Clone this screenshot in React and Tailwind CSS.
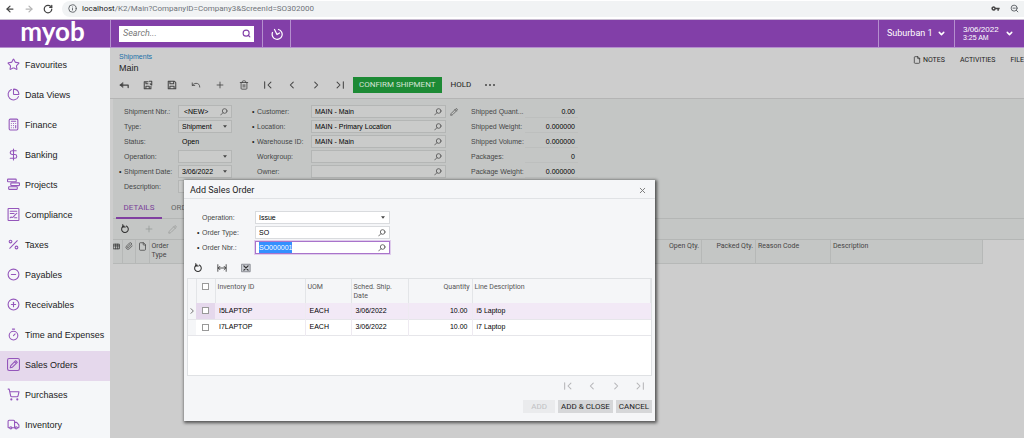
import { useEffect, useRef } from "react"
import {
  ArrowLeft,
  ArrowRight,
  Calculator,
  ChartPie,
  ChevronDown,
  CircleMinus,
  CirclePlus,
  DollarSign,
  File,
  Info,
  Paperclip,
  Pencil,
  Percent,
  Plus,
  RotateCw,
  Search,
  ShoppingCart,
  Star,
  Timer,
  Trash2,
  Truck,
  Undo,
  X,
  ZoomOut,
} from "lucide-react"
import { MdVpnKey } from "react-icons/md"

// ---- icons that the icon packages lack ----

function Svg({ children, className, box = 24, width = 2 }) {
  return (
    <svg
      viewBox={`0 0 ${box} ${box}`}
      className={className}
      fill="none"
      stroke="currentColor"
      strokeWidth={width}
      strokeLinecap="round"
      strokeLinejoin="round"
      aria-hidden="true"
    >
      {children}
    </svg>
  )
}

const GanttIcon = ({ className }) => (
  <Svg className={className}>
    <rect x="1" y="2" width="16" height="5" rx="1" />
    <rect x="7" y="9" width="16" height="5" rx="1" />
    <rect x="3" y="16" width="16" height="5" rx="1" />
  </Svg>
)

const ComplianceIcon = ({ className }) => (
  <Svg className={className}>
    <rect x="2" y="1" width="20" height="22" rx="1" />
    <path d="M6 6h12M6 10h7M6 18c2-3 3 1 5-1s4-5 7-7M14 18h4" />
  </Svg>
)

const OrderIcon = ({ className }) => (
  <Svg className={className}>
    <rect x="1" y="1" width="22" height="22" rx="3" />
    <path d="M6 18l1-4L16 5l3 3-9 9zM14 7l3 3" />
  </Svg>
)

// open ring with a hand that points into its gap
const ClockIcon = ({ className }) => (
  <Svg className={className} width={2.5}>
    <path d="M15 3A10 10 0 1 1 3 9" />
    <path d="M7 3l5 10 5-3" />
  </Svg>
)

const BackIcon = ({ className }) => (
  <Svg className={className} width={3}>
    <path d="M22 18v-6H3" />
    <path d="M9 6l-7 6 7 6z" fill="currentColor" strokeWidth="1" />
  </Svg>
)

const SaveIcon = ({ className }) => (
  <Svg className={className} width={2.5}>
    <path d="M3 3h15l3 3v15H3zM7 3v6h9V3M7 21v-6h10v6" />
  </Svg>
)

const SaveCloseIcon = ({ className }) => (
  <Svg className={className} width={2.5}>
    <path d="M12 4H3v17h16v-6M7 21v-6h8v6M7 4v5h5M15 3h6v9M21 12l-4-3" />
  </Svg>
)

const FirstIcon = ({ className }) => (
  <Svg className={className} width={2.5}>
    <path d="M4 4v16M19 5l-7 7 7 7" />
  </Svg>
)

const PrevIcon = ({ className }) => (
  <Svg className={className} width={2.5}>
    <path d="M15 5l-7 7 7 7" />
  </Svg>
)

const NextIcon = ({ className }) => (
  <Svg className={className} width={2.5}>
    <path d="M9 5l7 7-7 7" />
  </Svg>
)

const LastIcon = ({ className }) => (
  <Svg className={className} width={2.5}>
    <path d="M20 4v16M5 5l7 7-7 7" />
  </Svg>
)

const RefreshIcon = ({ className }) => (
  <Svg className={className} width={2.5}>
    <path d="M15 5a8 8 0 1 1-8 1" />
    <path d="M6 1v7h7z" fill="currentColor" strokeWidth="1" />
  </Svg>
)

const FitIcon = ({ className }) => (
  <Svg className={className} width={2}>
    <path d="M2 4v16M22 4v16M3 12h18M7 8l-4 4 4 4M17 8l4 4-4 4" />
  </Svg>
)

const ExcelIcon = ({ className }) => (
  <Svg className={className} width={3}>
    <rect x="2" y="3" width="20" height="18" strokeWidth="2" fill="#c9ccd2" stroke="#7d8087" />
    <path d="M7 7l10 10M17 7L7 17" />
  </Svg>
)

const LookupIcon = ({ className }) => (
  <Svg className={className} width={2.5}>
    <circle cx="14" cy="9" r="7" />
    <path d="M9 14l-7 7" />
  </Svg>
)

const CaretIcon = ({ className }) => (
  <svg viewBox="0 0 8 5" className={className} fill="currentColor" aria-hidden="true">
    <path d="M0 0h8L4 5z" />
  </svg>
)

const GridNoteIcon = ({ className }) => (
  <Svg className={className} width={3}>
    <path d="M2 4h20v16H2zM2 10h20M9 4v16M16 4v16" />
  </Svg>
)

// ---- data ----

const menu = [
  { name: "Favourites", icon: Star },
  { name: "Data Views", icon: ChartPie },
  { name: "Finance", icon: Calculator },
  { name: "Banking", icon: DollarSign },
  { name: "Projects", icon: GanttIcon },
  { name: "Compliance", icon: ComplianceIcon },
  { name: "Taxes", icon: Percent },
  { name: "Payables", icon: CircleMinus },
  { name: "Receivables", icon: CirclePlus },
  { name: "Time and Expenses", icon: Timer },
  { name: "Sales Orders", icon: OrderIcon, active: true },
  { name: "Purchases", icon: ShoppingCart },
  { name: "Inventory", icon: Truck },
]

const actions = [
  { name: "Back", icon: BackIcon },
  { name: "Save and close", icon: SaveCloseIcon },
  { name: "Save", icon: SaveIcon },
  { name: "Undo", icon: Undo },
  { name: "Add", icon: Plus },
  { name: "Delete", icon: Trash2 },
  { name: "First", icon: FirstIcon },
  { name: "Previous", icon: PrevIcon },
  { name: "Next", icon: NextIcon },
  { name: "Last", icon: LastIcon },
]

const totals = [
  { label: "Shipped Quant...", value: "0.00" },
  { label: "Shipped Weight:", value: "0.000000" },
  { label: "Shipped Volume:", value: "0.000000" },
  { label: "Packages:", value: "0" },
  { label: "Package Weight:", value: "0.000000" },
]

const lines = [
  { id: "I5LAPTOP", uom: "EACH", date: "3/06/2022", qty: "10.00", text: "i5 Laptop", current: true },
  { id: "I7LAPTOP", uom: "EACH", date: "3/06/2022", qty: "10.00", text: "i7 Laptop" },
]

// ---- form parts ----

function Label({ htmlFor, required, className, children }) {
  return (
    <label htmlFor={htmlFor} className={`flex shrink-0 items-center whitespace-nowrap text-[#454747] ${className}`}>
      <span className="w-[5px] shrink-0 text-[#222]">{required && "•"}</span>
      {children}
    </label>
  )
}

const dimBox = "border-[#b4b6b5] bg-[#cacbca]"

function LookupField({ id, label, value = "", required, labelWidth, boxWidth, box = dimBox, inputRef, children }) {
  return (
    <div className="flex h-[13px] items-center">
      <Label htmlFor={id} required={required} className={labelWidth}>{label}</Label>
      <div className={`flex h-[13px] shrink-0 items-center border pr-[3px] ${boxWidth} ${box}`}>
        <input
          id={id}
          ref={inputRef}
          defaultValue={value}
          className="min-w-0 flex-1 bg-transparent pl-[3px] text-black outline-none selection:bg-[#3390ff] selection:text-white"
        />
        <LookupIcon className="size-[8px] text-[#555]" />
      </div>
      {children}
    </div>
  )
}

function SelectField({ id, label, value = "", required, labelWidth, boxWidth, box = dimBox }) {
  return (
    <div className="flex h-[13px] items-center">
      <Label htmlFor={id} required={required} className={labelWidth}>{label}</Label>
      <div className={`flex h-[13px] shrink-0 items-center border pr-[4px] ${boxWidth} ${box}`}>
        <select id={id} defaultValue={value} className="min-w-0 flex-1 appearance-none bg-transparent pl-[3px] text-black outline-none">
          <option>{value}</option>
        </select>
        <CaretIcon className="h-[3px] w-[4px] text-[#444]" />
      </div>
    </div>
  )
}

// ---- page parts ----

function AddressBar() {
  return (
    <div className="flex h-5 shrink-0 items-center border-b border-[#c9bdd2] bg-white pb-[2px] text-[#5f6368]">
      <div className="flex w-[62px] items-center gap-[9px] pl-[5px]">
        <button aria-label="Back"><ArrowLeft className="size-[10px] text-[#444]" strokeWidth={3} /></button>
        <button aria-label="Forward"><ArrowRight className="size-[10px] text-[#b5b5b5]" strokeWidth={3} /></button>
        <button aria-label="Reload"><RotateCw className="size-[10px] text-[#444]" strokeWidth={3} /></button>
      </div>
      <div className="flex h-4 flex-1 items-center rounded-l-full bg-[#f1f3f4] pr-[5px] pl-[6px]">
        <Info className="size-[9px]" strokeWidth={2.5} />
        <span className="ml-[5px] flex-1 text-[8px] text-[#70747a]">
          <span className="text-[#222]">localhost</span>/K2/Main?CompanyID=Company3&amp;ScreenId=SO302000
        </span>
        <MdVpnKey className="mr-[10px] size-[9px] text-[#444]" />
        <ZoomOut className="size-[9px]" strokeWidth={2.5} />
      </div>
    </div>
  )
}

function Header() {
  return (
    <header className="flex h-[28px] shrink-0 items-stretch border-b border-[#b58fce] bg-[#823fa8] text-white">
      <div className="flex w-[110px] shrink-0 items-center justify-center pr-[5px] pb-[5px] font-[Lato,sans-serif] text-[26px] leading-[22px] font-bold">
        myob
      </div>
      <div className="flex w-[152px] shrink-0 items-center border-l border-[#b58fce] px-2">
        <div className="flex h-4 w-[135px] items-center bg-white pr-[3px]">
          <input
            aria-label="Search"
            placeholder="Search..."
            className="min-w-0 flex-1 pl-1 text-[9px] text-[#333] outline-none placeholder:text-[#777] placeholder:italic"
          />
          <Search className="size-[9px] text-[#823fa8]" strokeWidth={3} />
        </div>
      </div>
      <button aria-label="History" className="flex w-[29px] items-center justify-center border-x border-[#b58fce]">
        <ClockIcon className="size-[12px]" />
      </button>
      <button className="ml-auto flex w-[76px] items-center border-l border-[#b58fce] pl-[8px] text-[9px]">
        Suburban 1
        <ChevronDown className="ml-[4px] size-[9px]" strokeWidth={4} />
      </button>
      <button className="flex w-[70px] items-center border-l border-[#b58fce] pl-[8px] text-left font-['Liberation_Sans',sans-serif]">
        <span>
          <span className="block text-[8px] leading-[9px]">3/06/2022</span>
          <span className="block text-[7px] leading-[8px]">3:25 AM</span>
        </span>
        <ChevronDown className="ml-[6px] size-[9px]" strokeWidth={4} />
      </button>
    </header>
  )
}

function Sidebar() {
  return (
    <nav className="w-[110px] shrink-0 bg-[#f5f7f9] pt-[3px]">
      {menu.map((item) => {
        const Icon = item.icon
        return (
          <a
            key={item.name}
            href="#"
            className={`flex h-[30px] items-center pl-[7px] font-['Liberation_Sans',sans-serif] text-[9px] whitespace-nowrap text-[#222] ${item.active ? "bg-[#e5d8ec]" : ""}`}
          >
            <Icon className="mb-[3px] size-[13px] shrink-0 text-[#9456bb]" />
            <span className="pl-[5px]">{item.name}</span>
          </a>
        )
      })}
    </nav>
  )
}

function ScreenTitle() {
  return (
    <div className="h-[51px] border-b border-[#b4b4b4] pl-[9px]">
      <div className="flex justify-between pt-[4px]">
        <div className="font-['Liberation_Sans',sans-serif]">
          <a href="#" className="block text-[7px] leading-[10px] text-[#1b70a8]">Shipments</a>
          <h1 className="text-[9px] leading-[12px] text-[#222]">Main</h1>
        </div>
        <div className="flex h-4 items-center gap-[15px] text-[7px] text-[#222]">
          <button className="flex items-center gap-[2px]">
            <File className="size-[8px]" />
            NOTES
          </button>
          <button>ACTIVITIES</button>
          <button>FILE</button>
        </div>
      </div>
      <div className="flex h-[22px] items-center">
        {actions.map((action) => {
          const Icon = action.icon
          return (
            <button key={action.name} aria-label={action.name} className="mr-[14px] text-[#444]">
              <Icon className="size-[10px]" />
            </button>
          )
        })}
        <button className="-ml-[6px] h-4 bg-[#1d8a35] px-[6px] text-[8px] text-[#d5e3d7]">CONFIRM SHIPMENT</button>
        <button className="ml-[9px] text-[8px] text-[#222]">HOLD</button>
        <button aria-label="More actions" className="ml-[14px] flex gap-[2px]">
          <span className="size-[2px] rounded-full bg-[#444]" />
          <span className="size-[2px] rounded-full bg-[#444]" />
          <span className="size-[2px] rounded-full bg-[#444]" />
        </button>
      </div>
    </div>
  )
}

function ShipmentForm() {
  const left = { labelWidth: "w-[59px]", boxWidth: "w-[54px]" }
  const middle = { labelWidth: "w-[59px]", boxWidth: "w-[135px]" }

  return (
    <form className="flex items-start pt-[6px] pl-[6px] font-['Liberation_Sans',sans-serif] text-[7px] leading-[11px]">
      <div className="flex flex-col gap-[2px]">
        <LookupField id="nbr" label="Shipment Nbr.:" value=" <NEW>" {...left} />
        <SelectField id="type" label="Type:" value="Shipment" {...left} />
        <div className="flex h-[13px] items-center">
          <Label htmlFor="status" className="w-[59px]">Status:</Label>
          <output id="status" className="pl-[4px] text-black">Open</output>
        </div>
        <SelectField id="operation" label="Operation:" {...left} />
        <SelectField id="date" label="Shipment Date:" value="3/06/2022" required {...left} />
        <div className="flex h-[13px] items-center">
          <Label htmlFor="description" className="w-[59px]">Description:</Label>
          <input id="description" className={`h-[13px] w-[54px] border outline-none ${dimBox}`} />
        </div>
      </div>
      <div className="ml-[20px] flex flex-col gap-[2px]">
        <LookupField id="customer" label="Customer:" value="MAIN - Main" required {...middle}>
          <button type="button" aria-label="Edit customer" className="ml-[4px]">
            <Pencil className="size-[8px] text-[#444]" />
          </button>
        </LookupField>
        <LookupField id="location" label="Location:" value="MAIN - Primary Location" required {...middle} />
        <LookupField id="warehouse" label="Warehouse ID:" value="MAIN - Main" required {...middle} />
        <LookupField id="workgroup" label="Workgroup:" {...middle} />
        <LookupField id="owner" label="Owner:" {...middle} />
      </div>
      <dl className="ml-[13px] flex flex-col gap-[2px]">
        {totals.map((total) => (
          <div key={total.label} className="flex h-[13px] items-center">
            <dt className="w-[54px] whitespace-nowrap text-[#454747]">{total.label}</dt>
            <dd className="w-[53px] border-b border-[#bdbfbe] pr-[3px] text-right text-black">{total.value}</dd>
          </div>
        ))}
      </dl>
    </form>
  )
}

function DetailsGrid() {
  const cell = "border-r border-[#b6b8b7] px-[2px] pt-[2px] align-top font-normal"

  return (
    <>
      <div role="tablist" className="flex h-[21px] items-stretch border-b border-[#b4b6b5] pl-[3px] text-[8px]">
        <button role="tab" aria-selected="true" className="-mb-px w-[46px] border-b-2 border-[#8040a0] text-[#7a3f99]">
          DETAILS
        </button>
        <button role="tab" aria-selected="false" className="px-[9px] text-[#666]">ORDERS</button>
      </div>
      <div className="flex h-[21px] items-center gap-[14px] border-b border-[#b4b6b5] pl-[7px]">
        <button aria-label="Refresh lines"><RefreshIcon className="size-[10px] text-[#333]" /></button>
        <button aria-label="Add line"><Plus className="size-[10px] text-[#999b9a]" /></button>
        <button aria-label="Edit line"><Pencil className="size-[9px] text-[#999b9a]" /></button>
      </div>
      <div className="flex-1 bg-[#cdcdcd]">
        <table className="w-[870px] table-fixed border-b border-[#b6b8b7] bg-[#c4c6c5] text-[7px] leading-[9px] text-[#444]">
          <colgroup>
            <col className="w-[9px]" />
            <col className="w-[13px]" />
            <col className="w-[14px]" />
            <col className="w-[54px]" />
            <col />
            <col className="w-[54px]" />
            <col className="w-[75px]" />
            <col className="w-[152px]" />
          </colgroup>
          <thead>
            <tr className="h-[23px] text-left">
              <th aria-label="Status" className="border-r border-[#b6b8b7] pt-[3px] align-top"><GridNoteIcon className="size-[7px]" /></th>
              <th aria-label="Files" className={cell}><Paperclip className="size-[8px]" /></th>
              <th aria-label="Notes" className={cell}><File className="size-[9px]" /></th>
              <th className={cell}><span className="block w-5">Order Type</span></th>
              <th className={`${cell} text-right`}>Open Qty.</th>
              <th className={`${cell} text-right`}>Packed Qty.</th>
              <th className={cell}>Reason Code</th>
              <th className={cell}>Description</th>
            </tr>
          </thead>
        </table>
      </div>
    </>
  )
}

function OrderLines() {
  const head = "border-r border-[#e3e5e8] px-[2px] pt-[4px] align-top font-normal"
  const cell = "border-r border-[#eeeaf1] px-[4px]"

  return (
    <div className="h-[98px] border border-[#dfe1e4] bg-white">
      <table className="w-full table-fixed text-left text-[7px] text-black">
        <colgroup>
          <col className="w-[8px]" />
          <col className="w-[19px]" />
          <col className="w-[90px]" />
          <col className="w-[46px]" />
          <col className="w-[57px]" />
          <col className="w-[64px]" />
          <col />
        </colgroup>
        <thead className="bg-[#f5f6f8] text-[7px] leading-[9px] text-[#555]">
          <tr className="h-[24px]">
            <th className="border-r border-[#e3e5e8]" aria-label="Current row" />
            <th className={head}>
              <input type="checkbox" aria-label="Select all" className="mx-auto block size-[7px] appearance-none border border-[#999] bg-white" />
            </th>
            <th className={head}>Inventory ID</th>
            <th className={head}>UOM</th>
            <th className={head}><span className="block w-[42px]">Sched. Ship. Date</span></th>
            <th className={`${head} text-right`}>Quantity</th>
            <th className={head}>Line Description</th>
          </tr>
        </thead>
        <tbody className="font-['Liberation_Sans',sans-serif]">
          {lines.map((line) => (
            <tr key={line.id} className={`h-4 border-b border-[#e6e6ea] ${line.current ? "bg-[#f2e9f6]" : ""}`}>
              <td className="bg-[#f5f6f8]">{line.current && <NextIcon className="size-[8px] text-[#555]" />}</td>
              <td className={line.current ? "bg-[#e5d8ec]" : ""}>
                <input
                  type="checkbox"
                  aria-label={`Select ${line.id}`}
                  className="mx-auto block size-[7px] appearance-none border border-[#999] bg-white"
                />
              </td>
              <td className={cell}>{line.id}</td>
              <td className={cell}>{line.uom}</td>
              <td className={cell}>{line.date}</td>
              <td className={`${cell} text-right`}>{line.qty}</td>
              <td className="px-[4px]">{line.text}</td>
            </tr>
          ))}
        </tbody>
      </table>
    </div>
  )
}

function AddSalesOrder() {
  const orderNbr = useRef(null)
  const size = { labelWidth: "w-[58px]", boxWidth: "w-[135px]" }
  const box = "border-[#d9dbde] bg-white"

  // the order number is ready to be typed over
  useEffect(() => {
    orderNbr.current.focus()
    orderNbr.current.select()
  }, [])

  return (
    <div
      role="dialog"
      aria-label="Add Sales Order"
      className="absolute top-[180px] left-[184px] w-[471px] bg-[#f5f6f8] shadow-[1px_1px_3px_1px_rgba(0,0,0,0.6)]"
    >
      <div className="flex h-[19px] items-center justify-between border-b border-[#e0e2e5] pt-[2px] pr-[8px] pl-[6px]">
        <h2 className="text-[9px] leading-[14px] text-[#222]">Add Sales Order</h2>
        <button aria-label="Close"><X className="size-[9px] text-[#777]" strokeWidth={2.5} /></button>
      </div>
      <form className="flex flex-col gap-[2px] pt-[12px] pl-[13px] font-['Liberation_Sans',sans-serif] text-[7px] leading-[11px]">
        <SelectField id="so-operation" label="Operation:" value="Issue" box={box} {...size} />
        <LookupField id="so-type" label="Order Type:" value="SO" required box={box} {...size} />
        <LookupField
          id="so-nbr"
          label="Order Nbr.:"
          value="SO000001"
          required
          box="border-[#a974cb] bg-white ring-1 ring-[#e0cdec]"
          inputRef={orderNbr}
          {...size}
        />
      </form>
      <div className="flex h-[24px] items-center gap-[14px] pt-[4px] pl-[9px] text-[#333]">
        <button aria-label="Refresh"><RefreshIcon className="size-[10px]" /></button>
        <button aria-label="Fit to screen"><FitIcon className="size-[10px]" /></button>
        <button aria-label="Export to Excel"><ExcelIcon className="size-[10px]" /></button>
      </div>
      <div className="px-[3px]">
        <OrderLines />
        <div className="flex h-[20px] items-center justify-end gap-[14px] pr-[7px] text-[#b5b5b8]">
          <button aria-label="First page"><FirstIcon className="size-[10px]" /></button>
          <button aria-label="Previous page"><PrevIcon className="size-[10px]" /></button>
          <button aria-label="Next page"><NextIcon className="size-[10px]" /></button>
          <button aria-label="Last page"><LastIcon className="size-[10px]" /></button>
        </div>
        <div className="flex justify-end gap-[3px] pt-[4px] pb-[8px] text-[8px] leading-[13px] text-[#222]">
          <button disabled className="bg-[#eaebed] px-[8px] text-[#c0c1c4]">ADD</button>
          <button className="bg-[#d6d7d9] px-[3px]">ADD &amp; CLOSE</button>
          <button className="bg-[#d6d7d9] px-[3px]">CANCEL</button>
        </div>
      </div>
    </div>
  )
}

export default function App() {
  return (
    <div className="relative flex h-screen flex-col overflow-hidden font-[Roboto,Arial,sans-serif]">
      <AddressBar />
      <Header />
      <div className="flex min-h-0 flex-1">
        <Sidebar />
        <main className="flex min-w-0 flex-1 flex-col bg-[#cdcdcd]">
          <ScreenTitle />
          <div className="ml-[3px] flex flex-1 flex-col bg-[#c4c6c5]">
            <ShipmentForm />
            <div className="h-[5px]" />
            <DetailsGrid />
          </div>
        </main>
      </div>
      <AddSalesOrder />
    </div>
  )
}
